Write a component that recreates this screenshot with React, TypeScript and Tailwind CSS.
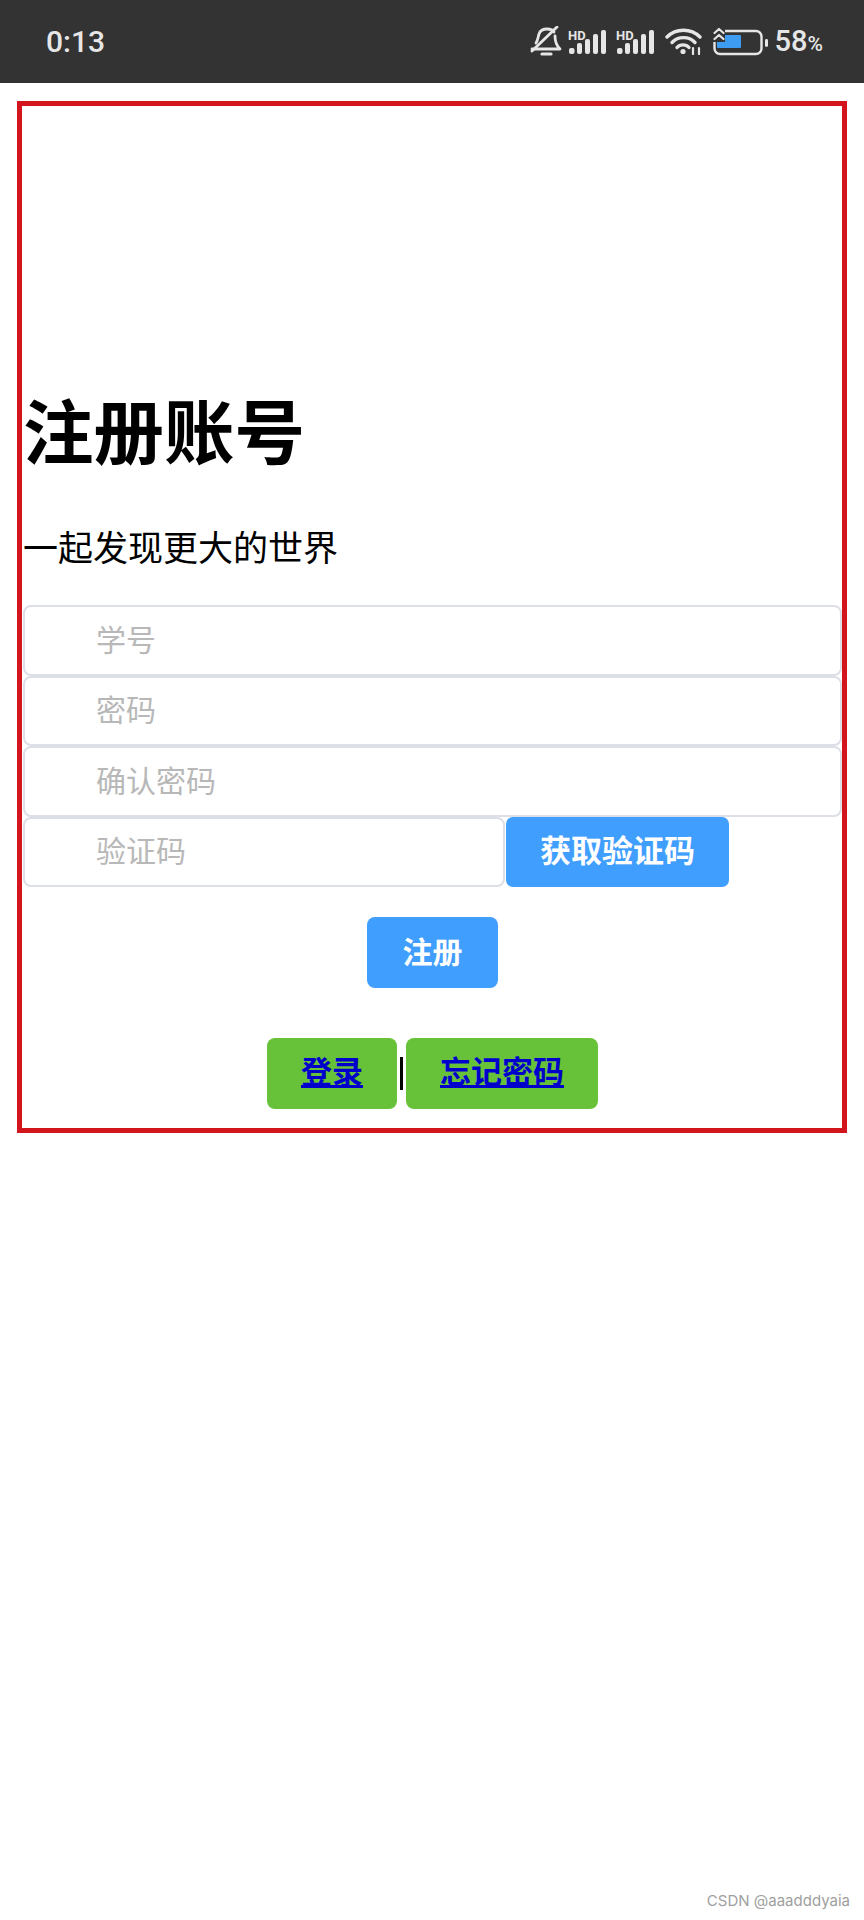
const cjk = "font-['Roboto','Noto_Sans_CJK_SC',sans-serif]";

function BellOff() {
  return (
    <svg width="38" height="31" viewBox="0 0 38 31" fill="none" stroke="#e6e6e6" strokeWidth="2.8" strokeLinecap="round" strokeLinejoin="round">
      <path d="M8 17 C10 14 10 11 11 8 C12 5 15 3 19 3 C22 3 25 4 26 6" />
      <path d="M27 10 C27 14 28 19 32 23 L4 23" />
      <path d="M14 28 H23" strokeWidth="3.2" />
      <path d="M4 25 L29 1" />
    </svg>
  );
}

function Signal() {
  return (
    <svg width="39" height="26" viewBox="0 0 39 26" fill="#e6e6e6">
      <text x="0" y="10.5" fontSize="13" fontWeight="700" fontFamily="Roboto, sans-serif">HD</text>
      <rect x="1" y="19" width="5.5" height="6" rx="2" />
      <rect x="9" y="14" width="5" height="11" rx="2" />
      <rect x="17" y="10" width="5" height="15" rx="2" />
      <rect x="25" y="5" width="5" height="20" rx="2" />
      <rect x="33" y="1" width="5" height="24" rx="2" />
    </svg>
  );
}

function Wifi() {
  return (
    <svg width="38" height="27" viewBox="0 0 38 27" fill="none" stroke="#e6e6e6" strokeWidth="3.4" strokeLinecap="round">
      <path d="M2 9 C11 0 26 0 35 9" />
      <path d="M7 14.5 C13 8 24 8 30 14.5" />
      <path d="M12 19.5 C15 16 21 16 24 19.5" />
      <circle cx="18" cy="23.5" r="2.6" fill="#e6e6e6" stroke="none" />
      <path d="M28 20 V26 M34 20 V26" strokeWidth="2.2" />
    </svg>
  );
}

function Battery() {
  return (
    <svg width="55" height="29" viewBox="0 0 55 29" fill="none">
      <rect x="1.5" y="4" width="47" height="23" rx="5.5" stroke="#e6e6e6" strokeWidth="2.4" />
      <rect x="4" y="8" width="24" height="13" rx="1" fill="#3f9cf3" />
      <rect x="0" y="0" width="12" height="15" fill="#333333" />
      <path d="M1.5 6 L6 2 L10.5 6 M1.5 12 L6 8 L10.5 12" stroke="#e6e6e6" strokeWidth="2.2" strokeLinecap="round" strokeLinejoin="round" />
      <rect x="52" y="12" width="3" height="8" rx="1.4" fill="#e6e6e6" />
    </svg>
  );
}

function StatusBar() {
  return (
    <div className="flex h-[83px] items-center justify-between bg-[#333333] pl-[46px] pr-[41px] text-[#e6e6e6] font-['Roboto',sans-serif]">
      <span className="text-[30px] font-medium leading-none">0:13</span>
      <div className="flex items-center">
        <BellOff />
        <div className="ml-[2px]"><Signal /></div>
        <div className="ml-[9px]"><Signal /></div>
        <div className="ml-[10px]"><Wifi /></div>
        <div className="ml-[10px]"><Battery /></div>
        <span className="ml-[7px] text-[29px] font-medium leading-none">
          58<span className="text-[21px]">%</span>
        </span>
      </div>
    </div>
  );
}

function Field({ placeholder, className }: { placeholder: string; className?: string }) {
  return (
    <input
      placeholder={placeholder}
      className={`h-[70.5px] rounded-[8px] border-2 border-[#dcdfe6] bg-white pl-[71px] text-[30px] outline-none placeholder:text-[#b8b8b8] ${className ?? "w-full"}`}
    />
  );
}

export default function App() {
  return (
    <div className={`flex min-h-[1920px] flex-col bg-white text-black ${cjk}`}>
      <StatusBar />
      <div className="mx-[17px] mt-[18px] h-[1032px] border-[5px] border-[#d3161d] pl-px">
        <h1 className="mt-[284px] text-[70.5px] font-bold leading-[90px]">注册账号</h1>
        <p className="mt-[45px] text-[35px] leading-[50px]">一起发现更大的世界</p>
        <form className="mt-[30px]">
          <Field placeholder="学号" />
          <Field placeholder="密码" />
          <Field placeholder="确认密码" />
          <div className="flex items-center gap-px">
            <Field placeholder="验证码" className="w-[482px]" />
            <button type="button" className="h-[70px] w-[223px] rounded-[7px] bg-[#409eff] text-[31px] font-semibold text-white">
              获取验证码
            </button>
          </div>
          <div className="mt-[30px] flex justify-center">
            <button type="button" className="h-[71px] w-[131px] rounded-[8px] bg-[#409eff] text-[30px] font-semibold text-white">
              注册
            </button>
          </div>
          <div className="mt-[50px] flex items-center justify-center">
            <a href="#" className="flex h-[71px] w-[130px] items-center justify-center rounded-[8px] bg-[#67c23a] text-[31px] font-bold text-[#0000cc] underline">
              登录
            </a>
            <span className="mx-[3px] h-[33px] w-[3px] bg-black" />
            <a href="#" className="flex h-[71px] w-[192px] items-center justify-center rounded-[8px] bg-[#67c23a] text-[31px] font-bold text-[#0000cc] underline">
              忘记密码
            </a>
          </div>
        </form>
      </div>
      <div className="mt-auto pb-[10px] pr-[14px] text-right font-['Inter',sans-serif] text-[15px] leading-[18px] text-[#a0a0a0]">
        CSDN @aaadddyaia
      </div>
    </div>
  );
}
